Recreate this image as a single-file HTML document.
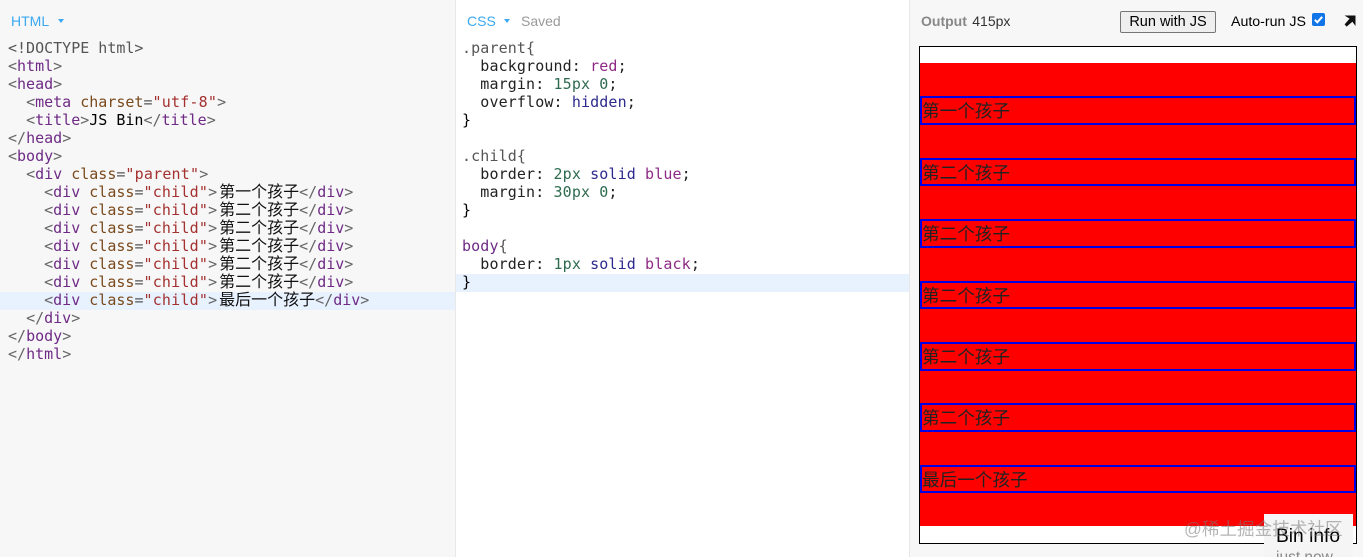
<!DOCTYPE html>
<html>
<head>
<meta charset="utf-8">
<style>
html,body{margin:0;padding:0;width:1363px;height:557px;overflow:hidden;background:#f7f7f7;font-family:"Liberation Sans","Noto Sans CJK SC",sans-serif}
.abs{position:absolute}
.panel{position:absolute;top:0;height:557px}
.code{position:absolute;margin:0;font:15px/18px "DejaVu Sans Mono","Liberation Mono","Noto Sans CJK SC",monospace;color:#000;white-space:pre}
.l{height:18px;padding-left:8px;display:block;position:relative}
.tag{color:#6e2a85}
.br{color:#666}
.attr{color:#7a4a1d}
.str{color:#a3312f;letter-spacing:.2px}
.eq{color:#555}
.d{color:#555}
.num{color:#2f6b50}
.kw{color:#8d2a85}
.val{color:#2d2a8d}
.cj{font:16px/0 "Noto Sans CJK SC","WenQuanYi Zen Hei",sans-serif;color:#111;margin-left:2px;letter-spacing:0}
.hl{position:absolute;height:18px;background:#e8f2ff}
.lab{position:absolute;top:14px;font-size:14px;line-height:14px;color:#3aa9f0}
.arrow{position:absolute;top:19px;width:0;height:0;border-left:3px solid transparent;border-right:3px solid transparent;border-top:4px solid #3aa9f0}
.child{position:absolute;left:920px;width:432px;height:25px;border:2px solid #0000e6;font:17.6px/25px "Noto Sans CJK SC","WenQuanYi Zen Hei",sans-serif;color:#222;white-space:nowrap}
</style>
</head>
<body>
<div class="panel" style="left:0;width:455px;background:#f7f7f7;border-right:1px solid #e8e8e8"></div>
<div class="panel" style="left:456px;width:453px;background:#fff;border-right:1px solid #e8e8e8"></div>
<div class="panel" style="left:910px;width:453px;background:#f7f7f7"></div>
<div class="hl" style="left:0;top:292px;width:455px"></div>
<div class="hl" style="left:456px;top:274px;width:453px"></div>

<div class="lab" style="left:11px">HTML</div><div class="arrow" style="left:58px"></div>
<div class="lab" style="left:467px">CSS</div><div class="arrow" style="left:504px"></div>
<div class="lab" style="left:521px;color:#999">Saved</div>

<div class="code" style="top:39px;left:0;width:455px"><span class="l d">&lt;!DOCTYPE html&gt;</span><span class="l"><span class="br">&lt;</span><span class="tag">html</span><span class="br">&gt;</span></span><span class="l"><span class="br">&lt;</span><span class="tag">head</span><span class="br">&gt;</span></span><span class="l">  <span class="br">&lt;</span><span class="tag">meta</span> <span class="attr">charset</span><span class="eq">=</span><span class="str">"utf-8"</span><span class="br">&gt;</span></span><span class="l">  <span class="br">&lt;</span><span class="tag">title</span><span class="br">&gt;</span>JS Bin<span class="br">&lt;/</span><span class="tag">title</span><span class="br">&gt;</span></span><span class="l"><span class="br">&lt;/</span><span class="tag">head</span><span class="br">&gt;</span></span><span class="l"><span class="br">&lt;</span><span class="tag">body</span><span class="br">&gt;</span></span><span class="l">  <span class="br">&lt;</span><span class="tag">div</span> <span class="attr">class</span><span class="eq">=</span><span class="str">"parent"</span><span class="br">&gt;</span></span><span class="l">    <span class="br">&lt;</span><span class="tag">div</span> <span class="attr">class</span><span class="eq">=</span><span class="str">"child"</span><span class="br">&gt;</span><span class="cj">第一个孩子</span><span class="br">&lt;/</span><span class="tag">div</span><span class="br">&gt;</span></span><span class="l">    <span class="br">&lt;</span><span class="tag">div</span> <span class="attr">class</span><span class="eq">=</span><span class="str">"child"</span><span class="br">&gt;</span><span class="cj">第二个孩子</span><span class="br">&lt;/</span><span class="tag">div</span><span class="br">&gt;</span></span><span class="l">    <span class="br">&lt;</span><span class="tag">div</span> <span class="attr">class</span><span class="eq">=</span><span class="str">"child"</span><span class="br">&gt;</span><span class="cj">第二个孩子</span><span class="br">&lt;/</span><span class="tag">div</span><span class="br">&gt;</span></span><span class="l">    <span class="br">&lt;</span><span class="tag">div</span> <span class="attr">class</span><span class="eq">=</span><span class="str">"child"</span><span class="br">&gt;</span><span class="cj">第二个孩子</span><span class="br">&lt;/</span><span class="tag">div</span><span class="br">&gt;</span></span><span class="l">    <span class="br">&lt;</span><span class="tag">div</span> <span class="attr">class</span><span class="eq">=</span><span class="str">"child"</span><span class="br">&gt;</span><span class="cj">第二个孩子</span><span class="br">&lt;/</span><span class="tag">div</span><span class="br">&gt;</span></span><span class="l">    <span class="br">&lt;</span><span class="tag">div</span> <span class="attr">class</span><span class="eq">=</span><span class="str">"child"</span><span class="br">&gt;</span><span class="cj">第二个孩子</span><span class="br">&lt;/</span><span class="tag">div</span><span class="br">&gt;</span></span><span class="l">    <span class="br">&lt;</span><span class="tag">div</span> <span class="attr">class</span><span class="eq">=</span><span class="str">"child"</span><span class="br">&gt;</span><span class="cj">最后一个孩子</span><span class="br">&lt;/</span><span class="tag">div</span><span class="br">&gt;</span></span><span class="l">  <span class="br">&lt;/</span><span class="tag">div</span><span class="br">&gt;</span></span><span class="l"><span class="br">&lt;/</span><span class="tag">body</span><span class="br">&gt;</span></span><span class="l"><span class="br">&lt;/</span><span class="tag">html</span><span class="br">&gt;</span></span></div>

<div class="code" style="top:39px;left:454px;width:455px;letter-spacing:.12px"><span class="l"><span class="d">.parent{</span></span><span class="l" style="color:#222">  background: <span class="kw">red</span>;</span><span class="l" style="color:#222">  margin: <span class="num">15px 0</span>;</span><span class="l" style="color:#222">  overflow: <span class="val">hidden</span>;</span><span class="l">}</span><span class="l"> </span><span class="l"><span class="d">.child{</span></span><span class="l" style="color:#222">  border: <span class="num">2px</span> <span class="val">solid</span> <span class="kw">blue</span>;</span><span class="l" style="color:#222">  margin: <span class="num">30px 0</span>;</span><span class="l">}</span><span class="l"> </span><span class="l"><span class="tag">body</span><span class="d">{</span></span><span class="l" style="color:#222">  border: <span class="num">1px</span> <span class="val">solid</span> <span class="kw">black</span>;</span><span class="l">}</span></div>

<div class="abs" style="left:921px;top:14px;font-size:14px;line-height:14px;color:#888;font-weight:bold">Output <span style="font-weight:normal;color:#333;margin-left:1.5px">415px</span></div>
<div class="abs" style="left:1120px;top:11px;width:94px;height:20px;border:1px solid #767676;border-radius:2px;background:#efefef;font-size:14.5px;line-height:20px;text-align:center;color:#000">Run with JS</div>
<div class="abs" style="left:1231px;top:14px;font-size:14.2px;line-height:16px;color:#000">Auto-run JS</div>
<div class="abs" style="left:1312px;top:13px;width:13px;height:13px;background:#0f75e8;border-radius:2px">
<svg width="13" height="13" viewBox="0 0 13 13" style="display:block"><path d="M2.8 6.8L5.3 9.3L10.2 3.8" fill="none" stroke="#fff" stroke-width="2"/></svg></div>
<svg class="abs" style="left:1343px;top:14px" width="14" height="13" viewBox="0 0 14 13"><path d="M1.5 1.5H12.5V12L9.4 7.8L3.6 12.6L1.6 10.4L6.6 4.6Z" fill="#111"/></svg>

<div class="abs" style="left:919px;top:46px;width:436px;height:496px;border:1px solid #000;background:#fff"></div>
<div class="abs" style="left:920px;top:63px;width:436px;height:463px;background:#f00"></div>
<div class="child" style="top:96px">第一个孩子</div>
<div class="child" style="top:158px;height:24px">第二个孩子</div>
<div class="child" style="top:219px;height:25px">第二个孩子</div>
<div class="child" style="top:281px;height:24px">第二个孩子</div>
<div class="child" style="top:342px;height:25px">第二个孩子</div>
<div class="child" style="top:403px;height:25px">第二个孩子</div>
<div class="child" style="top:465px;height:24px">最后一个孩子</div>

<div class="abs" style="left:1264px;top:514px;width:89px;height:43px;background:#f5f5f5;overflow:hidden">
<div class="abs" style="left:12px;top:12px;font-size:19.2px;line-height:22px;color:#000;white-space:nowrap">Bin info</div>
<div class="abs" style="left:12px;top:36px;font-size:15.5px;line-height:16px;color:#888;white-space:nowrap">just now</div>
</div>
<div class="abs" style="left:1184px;top:518px;font-size:17.6px;line-height:22px;color:rgba(120,120,120,.55);white-space:nowrap">@稀土掘金技术社区</div>
</body>
</html>
